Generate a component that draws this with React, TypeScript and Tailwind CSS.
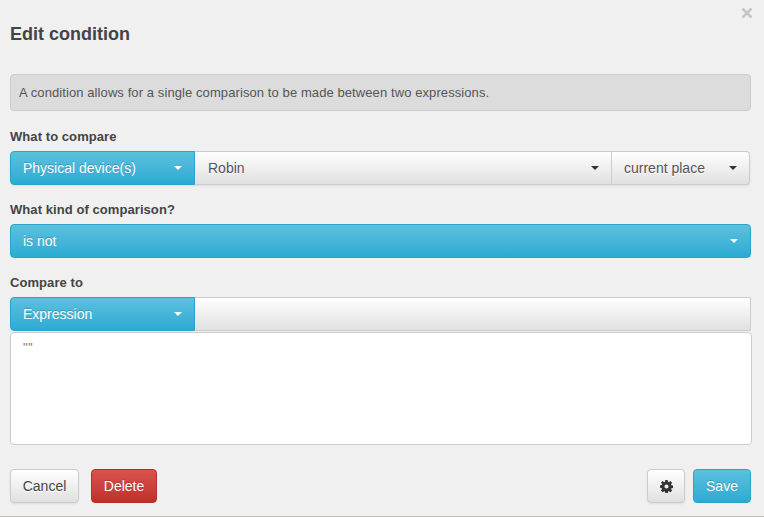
import React from "react";

const Caret = ({ className }: { className: string }) => (
  <span className={`ml-auto w-0 h-0 border-x-[4px] border-x-transparent border-t-[4px] ${className}`} />
);

const blue = "bg-gradient-to-b from-[#5bc0de] to-[#2aabd2] border border-[#28a4c9] text-white [text-shadow:0_-1px_0_rgba(0,0,0,0.2)]";
const white = "bg-gradient-to-b from-white to-[#e0e0e0] border border-[#ccc] text-[#333] [text-shadow:0_1px_0_#fff]";

function Label({ children, top }: { children: React.ReactNode; top: string }) {
  return <div className={`${top} h-[16px] leading-[16px] text-[13px] tracking-[0.07px] font-bold text-[#444]`}>{children}</div>;
}

export default function App() {
  return (
    <div className="relative w-[764px] h-[517px] overflow-hidden bg-[#f0f0f0] border-b border-[#bdbdb5] font-['Liberation_Sans',Arial,sans-serif] text-[#444] pl-[10px] pr-[12px]">
      <svg className="absolute left-[741px] top-[7px]" width="12" height="12" viewBox="0 0 12 12">
        <path d="M1.500 1.500 10.500 10.500M10.500 1.500 1.500 10.500" stroke="#c6c6c6" strokeWidth="2.600" />
      </svg>
      <h1 className="pt-[24px] h-[74px] text-[18px] leading-[21px] font-bold text-[#444]">Edit condition</h1>
      <div className="w-[741px] h-[37px] flex items-center pl-[8px] rounded-[4px] bg-[#dcdcdc] border border-[#ccc] text-[13px] tracking-[0.09px] text-[#555]">
        A condition allows for a single comparison to be made between two expressions.
      </div>
      <Label top="mt-[18px]">What to compare</Label>
      <div className="mt-[6px] flex w-[740px] h-[34px] text-[14px] rounded-[4px] shadow-[0_1px_2px_rgba(0,0,0,0.08)]">
        <div className={`${blue} w-[185px] flex items-center pl-[12px] pr-[12px] rounded-l-[4px]`}>
          Physical device(s)<Caret className="border-t-white" />
        </div>
        <div className={`${white} border-l-0 w-[417px] flex items-center pl-[13px] pr-[12px] text-[#555]`}>
          Robin<Caret className="border-t-[#333]" />
        </div>
        <div className={`${white} border-l-0 w-[138px] flex items-center pl-[12px] pr-[12px] rounded-r-[4px] text-[#555]`}>
          current place<Caret className="border-t-[#333]" />
        </div>
      </div>
      <Label top="mt-[17px]">What kind of comparison?</Label>
      <div className={`${blue} mt-[6px] w-[741px] h-[34px] flex items-center pl-[12px] pr-[12px] rounded-[4px] text-[14px]`}>
        is not<Caret className="border-t-white" />
      </div>
      <Label top="mt-[17px]">Compare to</Label>
      <div className="mt-[6px] flex w-[741px] h-[34px] text-[14px]">
        <div className={`${blue} w-[185px] flex items-center pl-[12px] pr-[12px] rounded-l-[4px]`}>
          Expression<Caret className="border-t-white" />
        </div>
        <div className={`${white} border-l-0 flex-1`} />
      </div>
      <div className="mt-px w-[742px] h-[113px] bg-white border border-[#ccc] rounded-[4px] pl-[12px] pt-[7px] text-[13px] leading-[16px] tracking-[0.5px] text-[#777]">
        ""
      </div>
      <div className="mt-[24px] w-[741px] flex items-center h-[34px] text-[14px]">
        <button className={`${white} w-[69px] h-[34px] rounded-[4px] text-[#444] shadow-[0_1px_2px_rgba(0,0,0,0.08)]`}>Cancel</button>
        <button className="ml-[12px] w-[66px] h-[34px] rounded-[4px] text-white bg-gradient-to-b from-[#d9534f] to-[#c12e2a] border border-[#b92c28] [text-shadow:0_-1px_0_rgba(0,0,0,0.2)]">Delete</button>
        <button className={`${white} ml-auto w-[38px] h-[34px] rounded-[4px] flex items-center justify-center shadow-[0_1px_2px_rgba(0,0,0,0.08)]`}>
          <svg width="13" height="13" viewBox="0 0 14 14">
            <path fill="#333" fillRule="evenodd" d="M5.700 0h2.600l.3 1.900 1 .4 1.600-1.100 1.800 1.800-1.100 1.600.4 1 1.900.3v2.600l-1.900.3-.4 1 1.100 1.600-1.800 1.800-1.600-1.100-1 .4-.3 1.900H5.700l-.3-1.900-1-.4-1.600 1.100L1 11.300l1.100-1.600-.4-1L0 8.300V5.700l1.900-.3.4-1L1 2.700 2.800 1.200l1.600 1.100 1-.4zM7 4.800a2.200 2.200 0 1 0 0 4.400 2.200 2.200 0 0 0 0-4.400z" />
          </svg>
        </button>
        <button className={`${blue} ml-[8px] w-[58px] h-[34px] rounded-[4px]`}>Save</button>
      </div>
    </div>
  );
}
